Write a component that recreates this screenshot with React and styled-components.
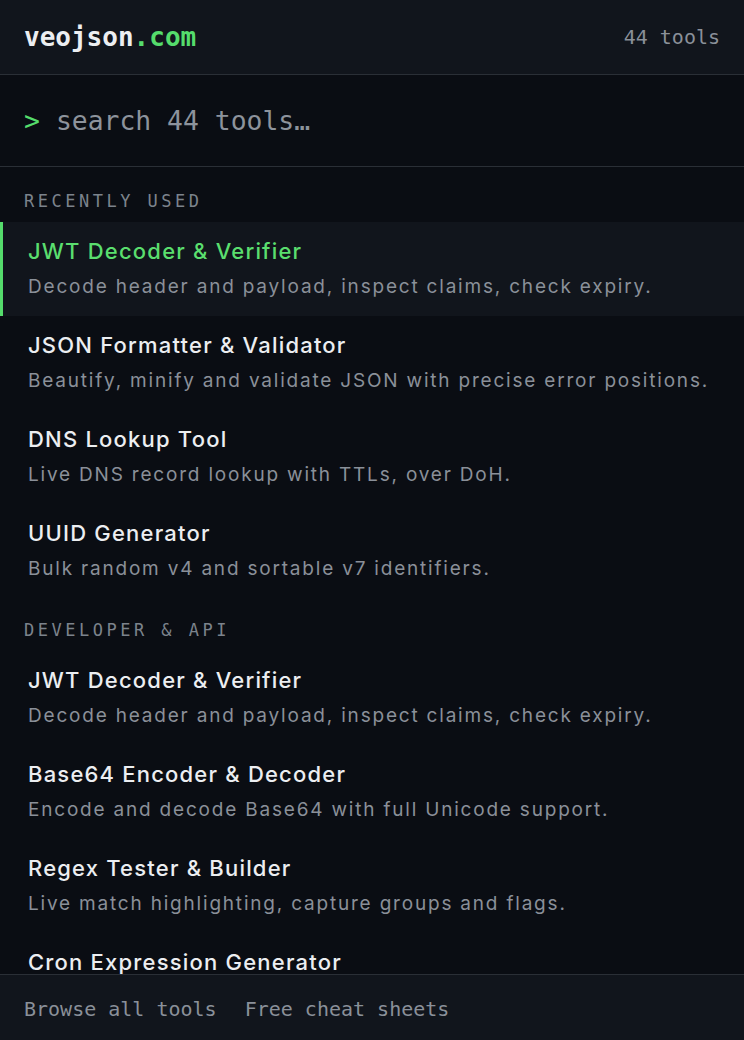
import React from 'react'
import styled, { createGlobalStyle } from 'styled-components'

const GlobalStyle = createGlobalStyle`
  html, body {
    margin: 0;
    padding: 0;
    background: #0a0d13;
  }
  * { box-sizing: border-box; }
`

const mono = `"DejaVu Sans Mono", "Liberation Mono", monospace`
const sans = `Inter, "Noto Sans", sans-serif`

const Page = styled.div`
  height: 100vh;
  display: flex;
  flex-direction: column;
  background: #0a0d13;
  overflow: hidden;
`
const Header = styled.header`
  height: 75px;
  flex-shrink: 0;
  display: flex;
  align-items: center;
  justify-content: space-between;
  padding: 0 24px 1px;
  background: #11151c;
  border-bottom: 1px solid #2a2f36;
`
const Logo = styled.div`
  font-family: ${mono};
  font-weight: 700;
  font-size: 26px;
  color: #eceef1;
`
const Tld = styled.span`
  color: #55dc6c;
`
const Count = styled.div`
  font-family: ${mono};
  font-size: 20px;
  color: #8a9099;
`
const Search = styled.div`
  height: 92px;
  flex-shrink: 0;
  display: flex;
  align-items: center;
  padding: 0 24px;
  border-bottom: 1px solid #2a2f36;
  font-family: ${mono};
  font-size: 26.4px;
  color: #8d939c;
`
const Prompt = styled.span`
  color: #55dc6c;
  margin-right: 16px;
`
const List = styled.div`
  flex: 1;
  overflow: hidden;
  padding-top: 2px;
`
const SectionLabel = styled.div`
  font-family: ${mono};
  font-size: 17px;
  line-height: 20px;
  letter-spacing: 3.5px;
  color: #7c838c;
  padding: 22px 24px 11px;
`
const Item = styled.div`
  height: 94px;
  padding: 15px 24px 0 25px;
  border-left: 3px solid ${p => (p.$active ? '#55dc6c' : 'transparent')};
  background: ${p => (p.$active ? '#11151c' : 'transparent')};
`
const Title = styled.div`
  font-family: ${sans};
  font-size: 22px;
  line-height: 28px;
  font-weight: 500;
  letter-spacing: 1.2px;
  color: ${p => (p.$active ? '#5ade6e' : '#eceef1')};
  white-space: nowrap;
`
const Desc = styled.div`
  font-family: ${sans};
  font-size: 19px;
  line-height: 24px;
  letter-spacing: 1.8px;
  margin-top: 10px;
  color: #8a9099;
  white-space: nowrap;
`
const Footer = styled.footer`
  height: 66px;
  flex-shrink: 0;
  display: flex;
  align-items: center;
  gap: 28px;
  padding: 2px 24px 0;
  background: #11151c;
  border-top: 1px solid #2a2f36;
`
const FooterLink = styled.a`
  font-family: ${mono};
  font-size: 20px;
  line-height: 24px;
  color: #8a9099;
  text-decoration: none;
`

const sections = [
  {
    label: 'Recently used',
    items: [
      { title: 'JWT Decoder & Verifier', desc: 'Decode header and payload, inspect claims, check expiry.', active: true },
      { title: 'JSON Formatter & Validator', desc: 'Beautify, minify and validate JSON with precise error positions.' },
      { title: 'DNS Lookup Tool', desc: 'Live DNS record lookup with TTLs, over DoH.' },
      { title: 'UUID Generator', desc: 'Bulk random v4 and sortable v7 identifiers.' },
    ],
  },
  {
    label: 'Developer & API',
    items: [
      { title: 'JWT Decoder & Verifier', desc: 'Decode header and payload, inspect claims, check expiry.' },
      { title: 'Base64 Encoder & Decoder', desc: 'Encode and decode Base64 with full Unicode support.' },
      { title: 'Regex Tester & Builder', desc: 'Live match highlighting, capture groups and flags.' },
      { title: 'Cron Expression Generator' },
    ],
  },
]

const App = () => {
  return (
    <Page>
      <GlobalStyle />
      <Header>
        <Logo>veojson<Tld>.com</Tld></Logo>
        <Count>44 tools</Count>
      </Header>
      <Search>
        <Prompt>&gt;</Prompt>
        search 44 tools…
      </Search>
      <List>
        {sections.map(s => (
          <div key={s.label}>
            <SectionLabel>{s.label.toUpperCase()}</SectionLabel>
            {s.items.map((it, i) => (
              <Item key={i} $active={it.active}>
                <Title $active={it.active}>{it.title}</Title>
                {it.desc && <Desc>{it.desc}</Desc>}
              </Item>
            ))}
          </div>
        ))}
      </List>
      <Footer>
        <FooterLink href="#">Browse all tools</FooterLink>
        <FooterLink href="#">Free cheat sheets</FooterLink>
      </Footer>
    </Page>
  )
}

export default App
